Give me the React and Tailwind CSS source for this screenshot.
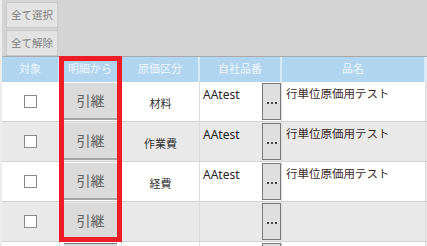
import React from "react";

const rows = [
  { kubun: "材料", code: "AAtest", name: "行単位原価用テスト" },
  { kubun: "作業費", code: "AAtest", name: "行単位原価用テスト" },
  { kubun: "経費", code: "AAtest", name: "行単位原価用テスト" },
  { kubun: "", code: "", name: "" },
  { kubun: "", code: "", name: "", last: true },
];

const font = { fontFamily: '"Noto Sans", "Noto Sans CJK JP", sans-serif' };

const App = () => {
  return (
    <div
      className="relative w-[427px] h-[246px] overflow-hidden bg-[#d4d4d4] border-l-2 border-[#ececec]"
      style={font}
    >
      {/* top toolbar */}
      <div className="h-[57px] flex flex-col gap-[2px] pl-[4px] pt-[2px] border-b border-[#a9a9a9]">
        <button className="w-[52px] h-[26px] bg-[#e3e3e3] border border-[#c9c9c9] text-[10.5px] text-[#808080] leading-none">
          全て選択
        </button>
        <button className="w-[52px] h-[26px] bg-[#e3e3e3] border border-[#c9c9c9] text-[10.5px] text-[#808080] leading-none">
          全て解除
        </button>
      </div>

      {/* header */}
      <div className="grid grid-cols-[58px_62px_78px_82px_144px_1fr] h-[25px] bg-[#b1d5ef] text-[11px] text-[#eef6fc]">
        <div className="flex items-center justify-center border-r-2 border-[#d6e9f7]">対象</div>
        <div className="flex items-center justify-center border-r-2 border-[#d6e9f7]">明細から</div>
        <div className="flex items-center justify-center border-r-2 border-[#d6e9f7]">原価区分</div>
        <div className="flex items-center justify-center border-r-2 border-[#d6e9f7]">自社品番</div>
        <div className="flex items-center justify-center border-r-2 border-[#d6e9f7]">品名</div>
        <div className="bg-[#eaeaea]"></div>
      </div>

      {/* rows */}
      {rows.map((r, i) => (
        <div
          key={i}
          className={
            "grid grid-cols-[58px_62px_78px_82px_144px_1fr] h-[40px] border-b border-[#d2d2d2] " +
            (i % 2 === 0 ? "bg-white" : "bg-[#e9e9e9]")
          }
        >
          <div className="flex items-center justify-center border-r border-[#dcdcdc]">
            {!r.last && <div className="w-[13px] h-[13px] bg-white border border-[#8a8a8a]"></div>}
          </div>
          <div className="px-[4px] py-[1px] border-r border-[#dcdcdc]">
            <div
              className={
                "h-full bg-[#dadada] border-b-2 border-[#a5a5a5] flex items-center justify-center text-[14px] text-[#606060] " +
                (r.last ? "border-t border-t-[#7a7a7a]" : "")
              }
            >
              {!r.last && "引継"}
            </div>
          </div>
          <div className="flex items-center justify-center pt-[6px] text-[11px] text-[#333] border-r border-[#dcdcdc]">
            {r.kubun}
          </div>
          <div className="flex border-r border-[#dcdcdc]">
            <div className="flex-1 pl-[3px] pt-[6px] text-[12px] text-[#222] leading-[14px]">{r.code}</div>
            <div className="w-[19px] my-[1px] bg-[#dedede] border border-[#7a7a7a] flex items-center justify-center gap-[2px] pt-[2px]">
              {!r.last && (
                <>
                  <span className="w-[2px] h-[2px] bg-[#444]"></span>
                  <span className="w-[2px] h-[2px] bg-[#444]"></span>
                  <span className="w-[2px] h-[2px] bg-[#444]"></span>
                </>
              )}
            </div>
          </div>
          <div className="pl-[4px] pt-[5px] text-[11.5px] text-[#3a2a2a] leading-[14px] border-r border-[#dcdcdc]">
            {r.name}
          </div>
          <div className="bg-[#eaeaea]"></div>
        </div>
      ))}

      {/* red highlight */}
      <div className="absolute left-[57px] top-[56px] w-[63px] h-[186px] border-[5px] border-[#ee1c24]"></div>
    </div>
  );
};

export default App;
